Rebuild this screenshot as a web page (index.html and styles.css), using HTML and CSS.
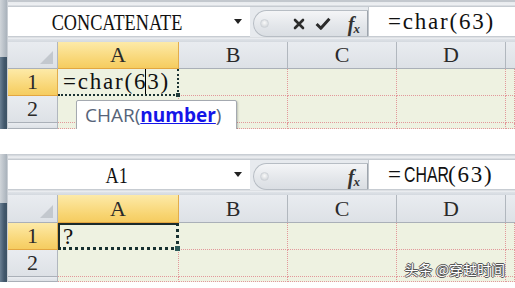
FILE: index.html
```html
<!DOCTYPE html>
<html>
<head>
<meta charset="utf-8">
<link rel="stylesheet" href="styles.css">
</head>
<body>
<div class="page">
  <section class="panel panel-top">
    <div class="side"><div class="side-light"></div><div class="side-dark"></div></div>
    <div class="sheet">
      <div class="strip"></div>
      <div class="fbar">
        <div class="namebox"><div class="name"><span class="name-txt">CONCATENATE</span></div><span class="drop"></span></div>
        <div class="pill">
          <span class="grip"></span>
          <svg class="ico-x" width="12" height="12" viewBox="0 0 12 12"><path d="M2 2 L10 10 M10 2 L2 10" stroke="#2b2b2b" stroke-width="2.6" stroke-linecap="round"/></svg>
          <svg class="ico-ok" width="16" height="13" viewBox="0 0 15 12"><path d="M1.5 6.5 L5.5 10.5 L13.5 1.5" stroke="#2b2b2b" stroke-width="2.8" fill="none" stroke-linejoin="round"/></svg>
          <span class="fx"><i>f</i><span class="fx-x">x</span></span>
        </div>
        <div class="input"><span class="ftxt">=char(63)</span></div>
      </div>
      <div class="sep"></div>
      <div class="grid grid-top">
        <div class="corner"><span class="tri"></span></div>
        <div class="ch ch-sel">A</div>
        <div class="ch">B</div>
        <div class="ch">C</div>
        <div class="ch">D</div>
        <div class="ch ch-end"></div>

        <div class="rh rh-sel">1</div>
        <div class="cell cell-edit">=char(6<span class="caret"></span>3)<span class="handle"></span></div>
        <div class="cell"></div>
        <div class="cell"></div>
        <div class="cell"></div>
        <div class="cell"></div>

        <div class="rh">2</div>
        <div class="cell"></div>
        <div class="cell"></div>
        <div class="cell"></div>
        <div class="cell"></div>
        <div class="cell"></div>

        <div class="rh"></div>
        <div class="cell"></div>
        <div class="cell"></div>
        <div class="cell"></div>
        <div class="cell"></div>
        <div class="cell"></div>
      </div>
    </div>
    <div class="tip">CHAR(<span class="arg">number</span>)</div>
  </section>

  <section class="panel panel-bottom">
    <div class="side"><div class="side-light side-light-b"></div><div class="side-dark"></div></div>
    <div class="sheet">
      <div class="strip strip-b"></div>
      <div class="fbar">
        <div class="namebox"><div class="name"><span class="name-txt">A1</span></div><span class="drop"></span></div>
        <div class="pill">
          <span class="grip"></span>
          <span class="fx"><i>f</i><span class="fx-x">x</span></span>
        </div>
        <div class="input"><span class="ftxt ftxt-eq">=</span><span class="narrow">CHAR</span><span class="ftxt">(63)</span></div>
      </div>
      <div class="sep"></div>
      <div class="grid grid-bottom">
        <div class="corner"><span class="tri"></span></div>
        <div class="ch ch-sel">A</div>
        <div class="ch">B</div>
        <div class="ch">C</div>
        <div class="ch">D</div>
        <div class="ch ch-end"></div>

        <div class="rh rh-sel">1</div>
        <div class="cell cell-active">?<span class="handle handle-b"></span></div>
        <div class="cell"></div>
        <div class="cell"></div>
        <div class="cell"></div>
        <div class="cell"></div>

        <div class="rh">2</div>
        <div class="cell"></div>
        <div class="cell"></div>
        <div class="cell"></div>
        <div class="cell"></div>
        <div class="cell"></div>

        <div class="rh"></div>
        <div class="cell"></div>
        <div class="cell"></div>
        <div class="cell"></div>
        <div class="cell"></div>
        <div class="cell"></div>
      </div>
    </div>
    <div class="mark">头条 @穿越时间</div>
  </section>
</div>
</body>
</html>
```

FILE: styles.css
```css
* { box-sizing: border-box; }
html, body { margin: 0; padding: 0; background: #fff; }
body { width: 515px; height: 288px; overflow: hidden; }

.page { display: flex; flex-direction: column; gap: 25px; }

.panel {
  position: relative;
  display: flex;
  height: 129px;
  overflow: hidden;
}
.panel-bottom { height: 128px; }

.side { width: 8px; display: flex; flex-direction: column; flex: none; border-right: 1px solid #c9ced4; }
.side-light { height: 57px; background: linear-gradient(90deg, #d0d5da, #a9b2bb); }
.side-light-b { height: 49px; }
.side-dark { flex: 1; background: linear-gradient(90deg, #6a7f92, #42586c 60%, #3c5264); }

.sheet { flex: 1; display: flex; flex-direction: column; background: #dfe3e8; }

.strip {
  height: 7px;
  background: linear-gradient(#c3c8ce 0, #c3c8ce 2px, #e8ebee 2px, #eef0f3 5px, #c6cbd1 6px);
}
.strip-b { height: 6px; background: linear-gradient(#c9ced4 0, #c9ced4 1px, #e3e6ea 2px, #eceef1 4px, #c6cbd1 5px); }

.fbar { height: 30px; display: flex; align-items: stretch; background: #e7eaee; }

.namebox {
  width: 242px;
  background: #fff;
  display: flex;
  align-items: center;
  position: relative;
  border-bottom: 1px solid #c7ccd2;
}
.name {
  width: 218px;
  display: flex;
  justify-content: center;
  line-height: 30px;
}
.name-txt {
  display: inline-block;
  font-family: "Liberation Serif", serif;
  font-size: 24px;
  color: #111;
  transform: scaleX(0.76);
  transform-origin: center;
  white-space: nowrap;
}
.drop {
  margin-left: 8px;
  width: 0; height: 0;
  border-left: 4px solid transparent;
  border-right: 4px solid transparent;
  border-top: 5px solid #222;
}

.pill {
  margin-left: 3px;
  margin-top: 3px;
  width: 115px;
  display: flex;
  align-items: center;
  background: linear-gradient(#f4f5f7, #e3e6ea 60%, #dadee3);
  border: 1px solid #b7bdc4;
  border-right: 1px solid #9ea5ad;
  border-radius: 14px 0 0 14px;
  padding-left: 6px;
}
.grip {
  width: 9px; height: 9px;
  border-radius: 50%;
  background: radial-gradient(circle at 50% 40%, #fafafa, #c8cdd2);
  border: 1px solid #cfd3d8;
}
.ico-x { margin-left: 24px; }
.ico-ok { margin-left: 10px; }
.fx {
  margin-left: auto;
  margin-right: 7px;
  font-family: "Liberation Serif", serif;
  font-weight: bold;
  color: #333;
  font-size: 20px;
  line-height: 1;
}
.fx i { font-style: italic; }
.fx-x { font-size: 13px; font-style: italic; position: relative; top: 2px; margin-left: -1px; }

.input {
  flex: 1;
  background: #fff;
  border-left: 1px solid #c2c7cd;
  border-bottom: 1px solid #c7ccd2;
  padding-left: 19px;
  color: #111;
  line-height: 30px;
  white-space: nowrap;
}
.ftxt {
  font-family: "Liberation Serif", serif;
  font-size: 23px;
  letter-spacing: 1.8px;
}
.ftxt-eq { letter-spacing: 0; }
.narrow {
  display: inline-block;
  width: 42px;
  font-family: "Liberation Sans", sans-serif;
  font-size: 22px;
  transform: scaleX(0.72);
  transform-origin: left center;
  margin-left: 3px;
  margin-right: 2px;
}

.sep { height: 5px; background: linear-gradient(#c6cbd1 0, #f4f5f7 1px, #dfe3e8 2px, #d4d9df 5px); }

.grid {
  display: grid;
  grid-template-columns: 50px 121px 109px 109px 109px 9px;
  background: #eef2e1;
}
.grid-top { grid-template-rows: 27px 27px 27px 6px; }
.grid-bottom { grid-template-rows: 28px 27px 27px 5px; }

.corner, .ch, .rh {
  background: linear-gradient(#e9ecf0, #dde1e6);
  border-right: 1px solid #b1b7be;
  border-bottom: 1px solid #aab0b8;
  font-family: "Liberation Serif", serif;
  font-size: 22px;
  color: #2a2a2a;
  display: flex;
  align-items: center;
  justify-content: center;
  line-height: 1;
}
.corner { position: relative; }
.tri {
  position: absolute;
  right: 4px; bottom: 4px;
  width: 0; height: 0;
  border-left: 13px solid transparent;
  border-bottom: 13px solid #c3c8ce;
}
.ch-end { border-right: none; }
.ch-sel, .rh-sel {
  background: linear-gradient(#fdeaa8, #f8d573 70%, #f5cc60);
  border-right: 1px solid #e3ad4b;
  border-bottom: 1px solid #e3a640;
}

.cell {
  border-right: 1px dotted #e2989a;
  border-bottom: 1px dotted #e2989a;
  position: relative;
  font-family: "Liberation Serif", serif;
  font-size: 23px;
  letter-spacing: 1.8px;
  color: #111;
  line-height: 26px;
  padding-left: 5px;
  white-space: nowrap;
}
.cell-edit {
  border-right: 2px dotted #1b3333;
  border-bottom: 2px dotted #1b3333;
}
.caret {
  display: inline-block;
  width: 0;
  height: 25px;
  border-left: 1px solid #000;
  vertical-align: -5px;
  margin: 0 1px 0 -2px;
}
.handle {
  position: absolute;
  right: -4px; bottom: -4px;
  width: 6px; height: 6px;
  background: #1f3a3a;
  border: 1px solid #eef2e1;
  z-index: 2;
}
.cell-active {
  border-top: 2px solid #1b2b2b;
  border-left: 2px solid #1b2b2b;
  border-right: 3px dotted #173030;
  border-bottom: 3px dotted #173030;
  padding-left: 3px;
  line-height: 24px;
}
.handle-b { right: -5px; bottom: -5px; width: 7px; height: 7px; background: #2a5858; }

.tip {
  position: absolute;
  left: 76px;
  top: 100px;
  width: 161px;
  height: 40px;
  background: #fff;
  border: 1px solid #a4a9b0;
  border-radius: 2px;
  box-shadow: 1px 1px 2px rgba(0,0,0,0.2);
  padding: 0 0 0 8px;
  font-family: "Open Sans", "Noto Sans", sans-serif;
  font-size: 19px;
  color: #566479;
  line-height: 28px;
  white-space: nowrap;
  z-index: 5;
}
.arg {
  color: #1515e8;
  font-weight: bold;
  text-decoration: underline;
}

.mark {
  position: absolute;
  right: 10px;
  bottom: 4px;
  font-family: "Noto Sans CJK SC", sans-serif;
  font-size: 14px;
  color: #fff;
  line-height: 18px;
  text-shadow: -1px 0 0 #555, 1px 0 0 #555, 0 -1px 0 #555, 0 1px 0 #555;
}
```
